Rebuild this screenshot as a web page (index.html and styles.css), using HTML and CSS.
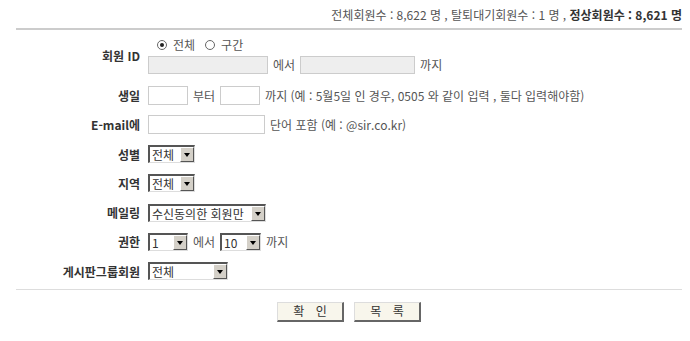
FILE: index.html
```html
<!DOCTYPE html>
<html lang="ko">
<head>
<meta charset="utf-8">
<link rel="stylesheet" href="styles.css">
</head>
<body>
<div class="page">
  <div class="summary">전체회원수 : 8,622 명 , 탈퇴대기회원수 : 1 명 , <b>정상회원수 : 8,621 명</b></div>
  <form class="form">
    <div class="row row-id">
      <div class="label">회원 ID</div>
      <div class="field">
        <div class="line">
          <label class="radio"><span class="dot on"></span>전체</label>
          <label class="radio"><span class="dot"></span>구간</label>
        </div>
        <div class="line">
          <input class="txt dis w120" type="text" disabled>
          <span class="t">에서</span>
          <input class="txt dis w116" type="text" disabled>
          <span class="t">까지</span>
        </div>
      </div>
    </div>
    <div class="row">
      <div class="label">생일</div>
      <div class="field line">
        <input class="txt w40" type="text">
        <span class="t">부터</span>
        <input class="txt w40" type="text">
        <span class="t">까지 (예 : 5월5일 인 경우, 0505 와 같이 입력 , 둘다 입력해야함)</span>
      </div>
    </div>
    <div class="row">
      <div class="label">E-mail에</div>
      <div class="field line">
        <input class="txt w117" type="text">
        <span class="t">단어 포함 (예 : @sir.co.kr)</span>
      </div>
    </div>
    <div class="row">
      <div class="label">성별</div>
      <div class="field line">
        <span class="sel w47"><span class="val">전체</span><span class="arr"></span></span>
      </div>
    </div>
    <div class="row">
      <div class="label">지역</div>
      <div class="field line">
        <span class="sel w47"><span class="val">전체</span><span class="arr"></span></span>
      </div>
    </div>
    <div class="row">
      <div class="label">메일링</div>
      <div class="field line">
        <span class="sel w118"><span class="val">수신동의한 회원만</span><span class="arr"></span></span>
      </div>
    </div>
    <div class="row">
      <div class="label">권한</div>
      <div class="field line">
        <span class="sel w40"><span class="val">1</span><span class="arr"></span></span>
        <span class="t">에서</span>
        <span class="sel w41"><span class="val">10</span><span class="arr"></span></span>
        <span class="t">까지</span>
      </div>
    </div>
    <div class="row">
      <div class="label">게시판그룹회원</div>
      <div class="field line">
        <span class="sel w80"><span class="val">전체</span><span class="arr"></span></span>
      </div>
    </div>
  </form>
  <div class="buttons">
    <button class="btn" type="button">확 인</button>
    <button class="btn" type="button">목 록</button>
  </div>
</div>
</body>
</html>
```
FILE: styles.css
```css
html, body {
  margin: 0;
  padding: 0;
  background: #fff;
}
body {
  font-family: "Noto Sans CJK KR", "Noto Sans", sans-serif;
  font-size: 12px;
  color: #555;
}
.page {
  margin: 0 8px 0 16px;
}
.summary {
  text-align: right;
  line-height: 16px;
  padding: 7px 0 5px;
  border-bottom: 2px solid #ccc;
  color: #555;
  font-size: 12px;
}
.summary b {
  color: #333;
}
.form {
  border-bottom: 1px solid #ddd;
  padding-bottom: 3px;
}
.row {
  display: grid;
  grid-template-columns: 124px 1fr;
  column-gap: 8px;
  align-items: center;
  height: 29.25px;
}
.row-id {
  height: 51px;
}
.label {
  text-align: right;
  font-weight: bold;
  color: #333;
  font-size: 12px;
  white-space: nowrap;
}
.field {
  display: flex;
  flex-direction: column;
  gap: 4px;
}
.line {
  display: flex;
  flex-direction: row;
  align-items: center;
  gap: 5px;
  white-space: nowrap;
}
.t {
  color: #555;
  line-height: 14px;
}
.radio {
  display: inline-flex;
  align-items: center;
  gap: 6px;
  margin-left: 9px;
  line-height: 14px;
}
.radio + .radio {
  margin-left: 5px;
}
.dot {
  width: 10px;
  height: 10px;
  border-radius: 50%;
  border: 1px solid #666;
  background: #fff;
  box-sizing: border-box;
  position: relative;
  display: inline-block;
}
.dot.on::after {
  content: "";
  position: absolute;
  left: 2px;
  top: 2px;
  width: 4px;
  height: 4px;
  border-radius: 50%;
  background: #222;
}
.txt {
  height: 19px;
  box-sizing: border-box;
  border: 1px solid #ccc;
  background: #fff;
  padding: 0 2px;
  margin: 0;
  font: inherit;
}
.txt.dis {
  background: #eee;
  height: 18px;
}
.w120 { width: 120px; }
.w116 { width: 115px; }
.w40 { width: 40px; }
.w117 { width: 117px; }
.sel {
  display: inline-flex;
  align-items: stretch;
  height: 18px;
  box-sizing: border-box;
  border-style: solid;
  border-width: 2px 1px 1px 2px;
  border-color: #555 #ddd #ddd #555;
  background: #fff;
}
.sel .val {
  flex: 1;
  padding-left: 2px;
  line-height: 15px;
  color: #333;
  overflow: visible;
}
.sel .arr {
  width: 14px;
  flex: none;
  box-sizing: border-box;
  background: #d4d0c8;
  border-style: solid;
  border-width: 1px;
  border-color: #fff #555 #555 #fff;
  position: relative;
}
.sel .arr::after {
  content: "";
  position: absolute;
  left: 3px;
  top: 5px;
  border-left: 3px solid transparent;
  border-right: 3px solid transparent;
  border-top: 4px solid #000;
}
.w47 { width: 47px; }
.w118 { width: 118px; }
.w41 { width: 41px; }
.w80 { width: 80px; }
.buttons {
  display: flex;
  justify-content: center;
  gap: 10px;
  padding-top: 12px;
}
.btn {
  width: 67px;
  height: 20px;
  box-sizing: border-box;
  background: #f8f6ec;
  border-style: solid;
  border-width: 1px 2px 2px 1px;
  border-color: #ddd #666 #666 #ddd;
  font: inherit;
  font-size: 12px;
  color: #333;
  padding: 0;
  line-height: 16px;
  word-spacing: 8px;
}
```
